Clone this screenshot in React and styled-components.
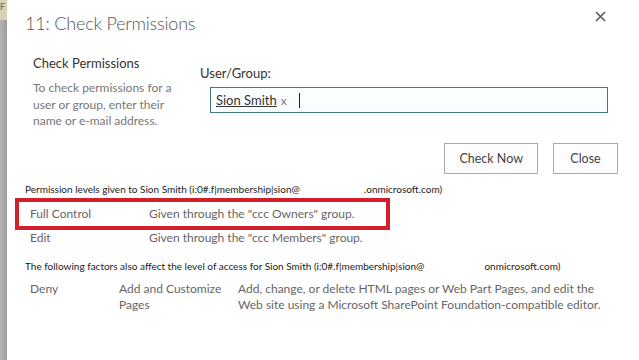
import React from 'react'
import styled, { createGlobalStyle } from 'styled-components'

const GlobalStyle = createGlobalStyle`
  html, body {
    margin: 0;
    padding: 0;
    background: #a9a9a9;
    font-family: Lato, "Open Sans", sans-serif;
  }
`

const permissions = [
  { level: 'Full Control', via: 'Given through the "ccc Owners" group.', highlight: true },
  { level: 'Edit', via: 'Given through the "ccc Members" group.' },
]

function CloseIcon() {
  return (
    <svg width="11" height="11" viewBox="0 0 11 11">
      <path d="M1 1 L10 10 M10 1 L1 10" stroke="#5a5a5a" strokeWidth="1.6" fill="none" />
    </svg>
  )
}

export default function App() {
  return (
    <>
      <GlobalStyle />
      <Page>
        <Edge>
          <EdgeTab>F</EdgeTab>
        </Edge>
        <Dialog>
          <Header>
            <Title>11: Check Permissions</Title>
            <CloseButton><CloseIcon /></CloseButton>
          </Header>

          <Intro>
            <Describe>
              <SectionTitle>Check Permissions</SectionTitle>
              <Hint>To check permissions for a user or group, enter their name or e-mail address.</Hint>
            </Describe>
            <Picker>
              <Label>User/Group:</Label>
              <PeopleBox>
                <Person>Sion Smith</Person>
                <Remove>x</Remove>
                <Caret />
              </PeopleBox>
            </Picker>
          </Intro>

          <Actions>
            <Button>Check Now</Button>
            <Button>Close</Button>
          </Actions>

          <Note>
            Permission levels given to Sion Smith (i:0#.f|membership|sion@<Hidden w={64} />.onmicrosoft.com)
          </Note>
          <Table>
            {permissions.map(p => (
              <Row key={p.level} highlight={p.highlight}>
                <Level>{p.level}</Level>
                <Via>{p.via}</Via>
              </Row>
            ))}
          </Table>

          <Note>
            The following factors also affect the level of access for Sion Smith (i:0#.f|membership|sion@<Hidden w={60} />onmicrosoft.com)
          </Note>
          <FactorRow>
            <Level>Deny</Level>
            <Perm>Add and Customize Pages</Perm>
            <Via>Add, change, or delete HTML pages or Web Part Pages, and edit the Web site using a Microsoft SharePoint Foundation-compatible editor.</Via>
          </FactorRow>
        </Dialog>
      </Page>
    </>
  )
}

const Page = styled.div`
  display: flex;
  width: 639px;
  height: 360px;
  overflow: hidden;
`

const Edge = styled.div`
  width: 7px;
  flex-shrink: 0;
  background: linear-gradient(to right, #b4b4b4, #9c9c9c);
`

const EdgeTab = styled.div`
  height: 20px;
  background: #d8d2b8;
  color: #6b6450;
  font-size: 9px;
  line-height: 14px;
  overflow: hidden;
`

const Dialog = styled.div`
  flex: 1;
  background: #fff;
  padding: 0 0 0 18px;
  color: #444;
`

const Header = styled.div`
  display: flex;
  align-items: flex-start;
  justify-content: space-between;
  padding: 10px 33px 0 0;
  height: 40px;
  box-sizing: border-box;
`

const Title = styled.h1`
  margin: 0;
  font-size: 18px;
  font-weight: 300;
  letter-spacing: -0.2px;
  color: #555;
  line-height: 26px;
`

const CloseButton = styled.div`
  padding-top: 1px;
  display: flex;
`

const Intro = styled.div`
  display: flex;
  padding: 14px 0 0 8px;
`

const Describe = styled.div`
  width: 140px;
  margin-right: 27px;
`

const SectionTitle = styled.div`
  font-size: 13px;
  color: #333;
  line-height: 18px;
`

const Hint = styled.div`
  margin-top: 8px;
  font-size: 12px;
  line-height: 16.5px;
  color: #777;
`

const Picker = styled.div`
  flex: 1;
  padding-top: 10px;
`

const Label = styled.div`
  font-size: 13px;
  color: #333;
  line-height: 18px;
`

const PeopleBox = styled.div`
  display: flex;
  align-items: center;
  margin: 5px 0 0 10px;
  width: 398px;
  height: 26px;
  box-sizing: border-box;
  border: 1px solid #3f7a7c;
  background: #fbfefe;
  padding-left: 5px;
  font-size: 13px;
`

const Person = styled.span`
  color: #333;
  text-decoration: underline;
`

const Remove = styled.span`
  color: #777;
  margin-left: 4px;
  font-size: 12px;
`

const Caret = styled.span`
  width: 1px;
  height: 15px;
  background: #222;
  margin-left: 12px;
`

const Actions = styled.div`
  display: flex;
  justify-content: flex-end;
  gap: 15px;
  padding: 13px 21px 0 0;
`

const Button = styled.div`
  border: 1px solid #ababab;
  background: #fdfdfd;
  color: #444;
  font-size: 12.5px;
  height: 31px;
  line-height: 29px;
  box-sizing: border-box;
  padding: 0 14px;
  min-width: 65px;
  text-align: center;
`

const Note = styled.div`
  font-size: 10px;
  color: #222;
  line-height: 14px;
  margin-top: 8px;
  white-space: nowrap;
`

const Hidden = styled.span`
  display: inline-block;
  width: ${p => p.w}px;
`

const Table = styled.div`
  margin: 2px 0 3px -10px;
`

const Row = styled.div`
  display: flex;
  width: 375px;
  height: 32px;
  align-items: center;
  box-sizing: border-box;
  padding-left: 11px;
  border: 4px solid ${p => (p.highlight ? '#d11f2c' : 'transparent')};
  font-size: 12px;
  color: #666;
  & + & {
    height: 21px;
    border: none;
    padding-left: 15px;
    align-items: flex-start;
  }
`

const Level = styled.div`
  width: 119px;
  flex-shrink: 0;
`

const Perm = styled.div`
  width: 119px;
  padding-right: 8px;
  box-sizing: border-box;
  flex-shrink: 0;
`

const Via = styled.div`
  white-space: nowrap;
`

const FactorRow = styled.div`
  display: flex;
  padding: 8px 36px 0 5px;
  font-size: 12px;
  color: #666;
  line-height: 16px;

  & ${Level} {
    width: 89px;
  }
  & ${Via} {
    white-space: normal;
  }
`
